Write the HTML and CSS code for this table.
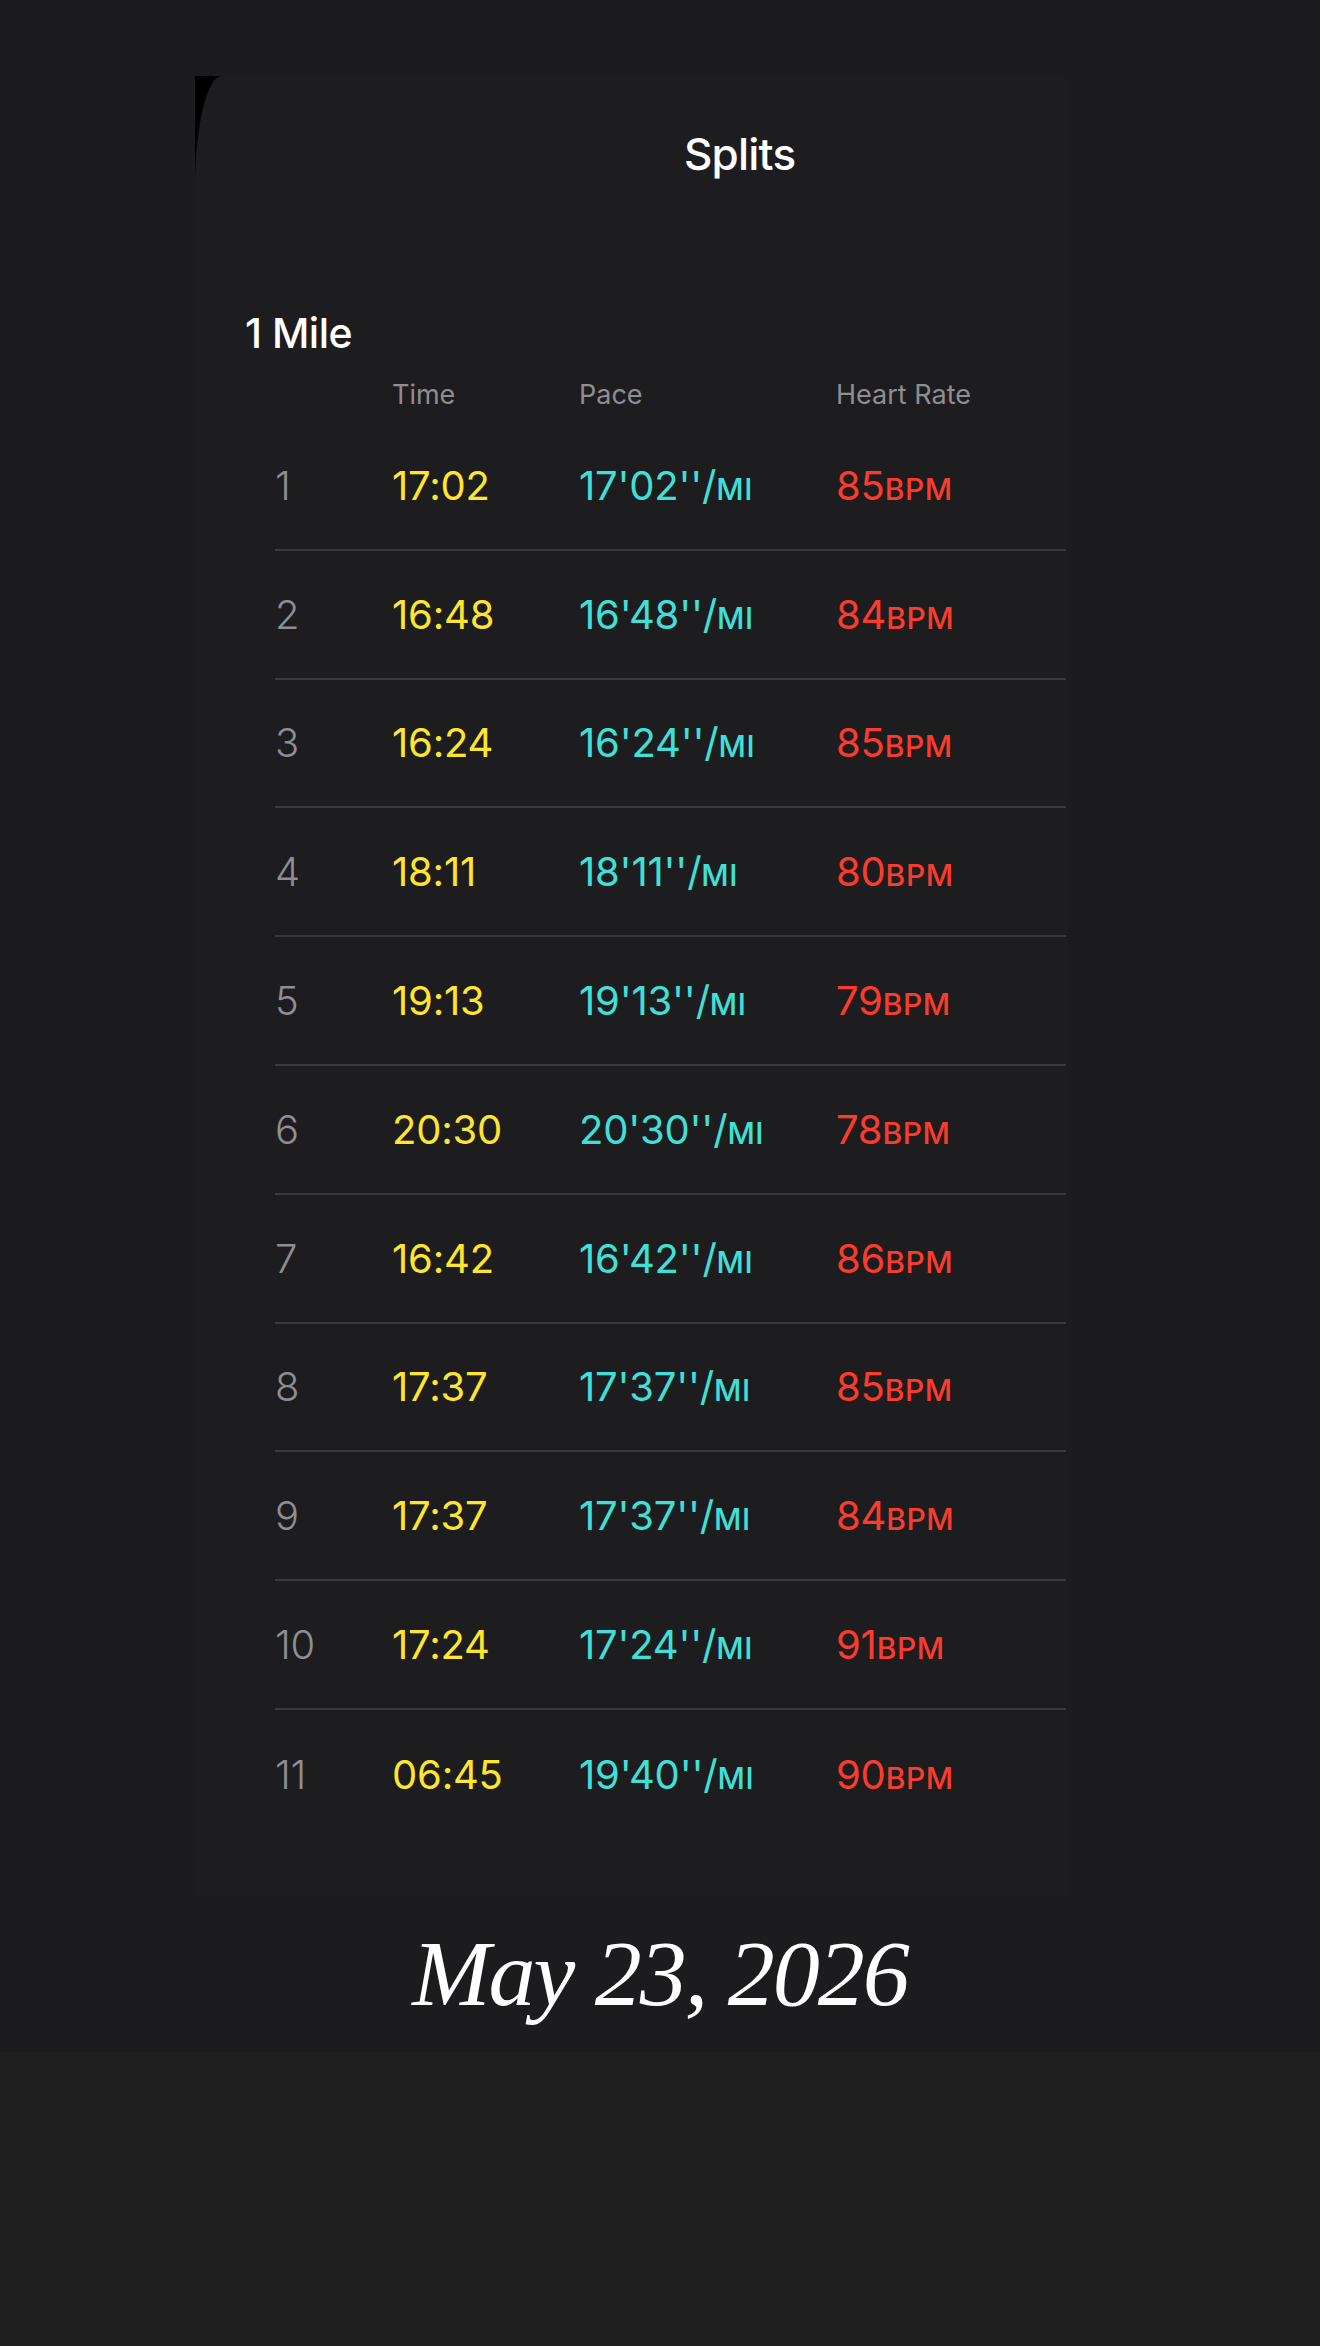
FILE: index.html
```html
<!DOCTYPE html>
<html lang="en">
<head>
<meta charset="utf-8">
<title>Splits</title>
<link rel="stylesheet" href="styles.css">
</head>
<body>
<div class="page">
  <div class="card">
    <svg class="corner" width="28" height="110" viewBox="0 0 28 110"><path d="M0 0 H27 A27 110 0 0 0 0 110 Z" fill="#000"/></svg>
    <div class="card-head">
      <h1 class="title">Splits</h1>
    </div>
    <h2 class="section">1 Mile</h2>
    <div class="cols">
      <span></span><span>Time</span><span>Pace</span><span>Heart Rate</span>
    </div>
    <div class="rows">
      <div class="row"><span class="n">1</span><span class="t">17:02</span><span class="p">17'02''/<small>MI</small></span><span class="h">85<small>BPM</small></span></div>
      <div class="row"><span class="n">2</span><span class="t">16:48</span><span class="p">16'48''/<small>MI</small></span><span class="h">84<small>BPM</small></span></div>
      <div class="row"><span class="n">3</span><span class="t">16:24</span><span class="p">16'24''/<small>MI</small></span><span class="h">85<small>BPM</small></span></div>
      <div class="row"><span class="n">4</span><span class="t">18:11</span><span class="p">18'11''/<small>MI</small></span><span class="h">80<small>BPM</small></span></div>
      <div class="row"><span class="n">5</span><span class="t">19:13</span><span class="p">19'13''/<small>MI</small></span><span class="h">79<small>BPM</small></span></div>
      <div class="row"><span class="n">6</span><span class="t">20:30</span><span class="p">20'30''/<small>MI</small></span><span class="h">78<small>BPM</small></span></div>
      <div class="row"><span class="n">7</span><span class="t">16:42</span><span class="p">16'42''/<small>MI</small></span><span class="h">86<small>BPM</small></span></div>
      <div class="row"><span class="n">8</span><span class="t">17:37</span><span class="p">17'37''/<small>MI</small></span><span class="h">85<small>BPM</small></span></div>
      <div class="row"><span class="n">9</span><span class="t">17:37</span><span class="p">17'37''/<small>MI</small></span><span class="h">84<small>BPM</small></span></div>
      <div class="row"><span class="n">10</span><span class="t">17:24</span><span class="p">17'24''/<small>MI</small></span><span class="h">91<small>BPM</small></span></div>
      <div class="row"><span class="n">11</span><span class="t">06:45</span><span class="p">19'40''/<small>MI</small></span><span class="h">90<small>BPM</small></span></div>
    </div>
  </div>
  <div class="date">May 23, 2026</div>
  <div class="foot"></div>
</div>
</body>
</html>
```

FILE: styles.css
```css
html, body {
  margin: 0;
  padding: 0;
  background: #1c1c1e;
}
.page {
  width: 1320px;
  height: 2346px;
  display: flex;
  flex-direction: column;
  padding-top: 76px;
  box-sizing: border-box;
  font-family: Inter, "Liberation Sans", sans-serif;
  color: #fff;
}
.card {
  position: relative;
  margin-left: 195px;
  width: 873px;
  height: 1820px;
  background: #1d1d1f;
  box-sizing: border-box;
}
.corner {
  position: absolute;
  left: 0;
  top: 0;
  display: block;
}
.card-head {
  height: 216px;
  padding-top: 52px;
  box-sizing: border-box;
}
.title {
  margin: 0 0 0 489px;
  font-size: 44px;
  line-height: 52px;
  font-weight: 500;
  letter-spacing: -0.8px;
}
.section {
  margin: 16px 0 0 50px;
  font-size: 41px;
  line-height: 50px;
  font-weight: 500;
  letter-spacing: -0.5px;
}
.cols,
.row {
  display: grid;
  grid-template-columns: 117px 187px 257px 1fr;
  margin-left: 80px;
  width: 791px;
}
.cols {
  margin-top: 20px;
  font-size: 27px;
  line-height: 34px;
  color: #8e8e93;
}
.rows {
  margin-top: 10px;
}
.row {
  height: 128.8px;
  box-sizing: border-box;
  align-items: center;
  border-bottom: 2px solid #3a3a3c;
  font-size: 40px;
  font-weight: 400;
  letter-spacing: -0.2px;
}
.row:last-child {
  border-bottom: none;
}
.n {
  color: #8e8e93;
  font-weight: 300;
}
.t { color: #ffe52e; }
.p { color: #40e0d8; }
.h { color: #fb3c2c; }
.row small {
  font-size: 30px;
  font-weight: 500;
  letter-spacing: 0.6px;
}
.date {
  margin-top: 22px;
  text-align: center;
  font-family: "Liberation Serif", "DejaVu Serif", serif;
  font-style: italic;
  font-size: 94px;
  line-height: 110px;
  letter-spacing: -2px;
  color: #fff;
}
.foot {
  margin-top: auto;
  height: 294px;
  background: #1f1f1f;
}
```
